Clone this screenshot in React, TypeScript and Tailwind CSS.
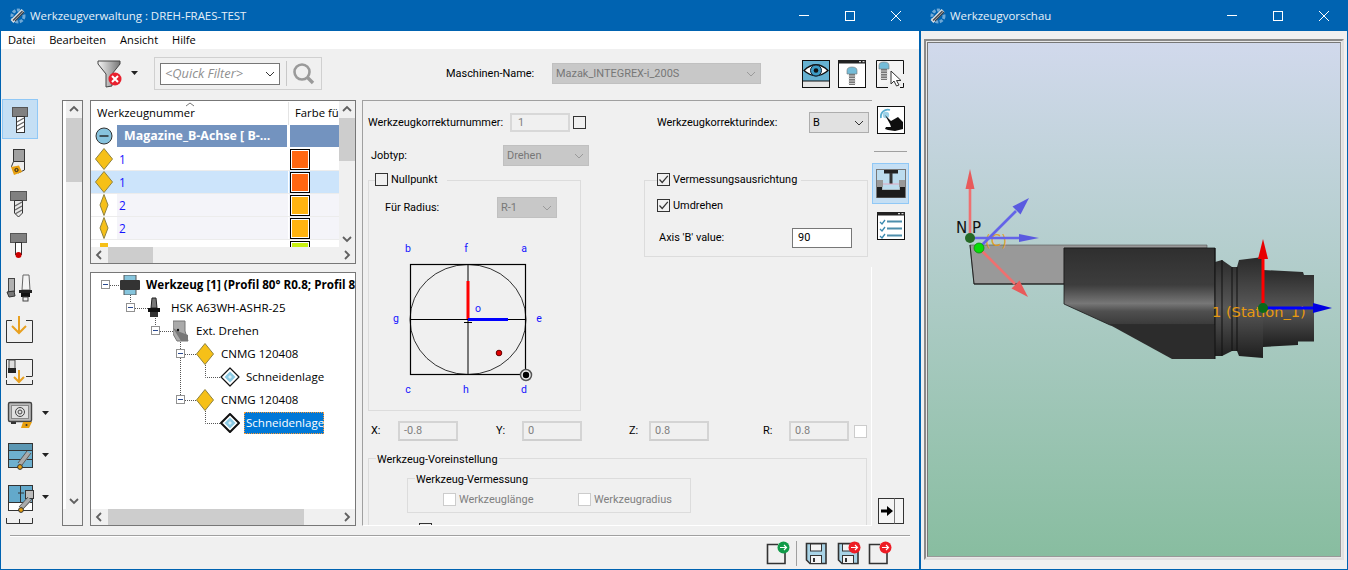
import React from "react";

const OS = "[font-family:'Open_Sans',sans-serif]";
const RB = "[font-family:Roboto,sans-serif]";

function Logo() {
  return (
    <svg width="18" height="18" viewBox="0 0 18 18" className="shrink-0">
      <circle cx="9" cy="9" r="6" fill="none" stroke="#6fa8d6" strokeWidth="3" strokeDasharray="3 1.4" />
      <path d="M3 14.5 14 3.5" stroke="#d8dde2" strokeWidth="4" />
      <path d="M4 13.5 13.5 4M6 14 15 5" stroke="#3a3f46" strokeWidth="1.1" />
    </svg>
  );
}

function WinButtons() {
  return (
    <div className="flex h-full items-center">
      <div className="flex h-full w-[46px] items-center justify-center">
        <div className="h-px w-[10px] bg-white" />
      </div>
      <div className="flex h-full w-[46px] items-center justify-center">
        <div className="h-[10px] w-[10px] border border-white" />
      </div>
      <div className="flex h-full w-[46px] items-center justify-center">
        <svg width="10" height="10" viewBox="0 0 10 10"><path d="M0 0 10 10M10 0 0 10" stroke="#fff" strokeWidth="1" /></svg>
      </div>
    </div>
  );
}

function TitleBar({ title }: { title: string }) {
  return (
    <div className={`flex h-[31px] shrink-0 items-center justify-between bg-[#0063b1] text-[#e6f0f8] ${OS}`}>
      <div className="flex items-center pl-[8px]">
        <Logo />
        <span className="ml-[3px] text-[11.45px]">{title}</span>
      </div>
      <WinButtons />
    </div>
  );
}

function Chevron({ dir }: { dir: "up" | "down" | "left" | "right" }) {
  const d = { up: "M1 6 5 2 9 6", down: "M1 3 5 7 9 3", left: "M6 1 2 5 6 9", right: "M3 1 7 5 3 9" }[dir];
  return (
    <svg width="10" height="10" viewBox="0 0 10 10" className="shrink-0">
      <path d={d} fill="none" stroke="#606060" strokeWidth="1.8" />
    </svg>
  );
}

function Caret() {
  return <path d="M0 0h7L3.5 4z" fill="#222" />;
}

function LeftIcon({ i }: { i: number }) {
  const caret = i >= 7 && i <= 9;
  return (
    <svg width="52" height="42" viewBox="0 0 52 42" className="block shrink-0">
      {i === 0 && (
        <g>
          <rect x="11.5" y="9.5" width="15" height="9" fill="#808080" stroke="#555" />
          <rect x="15.5" y="18.5" width="8" height="16" fill="#fff" stroke="#333" />
          <path d="M16 24 23 20M16 28 23 24M16 32 23 28" stroke="#666" strokeWidth="1.4" />
        </g>
      )}
      {i === 1 && (
        <g>
          <rect x="12.5" y="9.5" width="11" height="12" fill="#a0a0a0" stroke="#333" />
          <path d="M12.5 21.5H23.5V30L17 33 10.5 26.5Z" fill="#eee" stroke="#333" />
          <path d="M10 27 18 25.5 21 32 13 35Z" fill="#e8a010" />
          <circle cx="15.5" cy="30" r="1.6" fill="none" stroke="#222" />
        </g>
      )}
      {i === 2 && (
        <g>
          <rect x="9.5" y="9.5" width="16" height="9" fill="#808080" stroke="#555" />
          <path d="M13.5 18.5H21.5V31L17.5 35 13.5 31Z" fill="#e8e8e8" stroke="#333" />
          <path d="M14 24 21 20M14 28 21 24M14 32 21 28" stroke="#666" strokeWidth="1.4" />
        </g>
      )}
      {i === 3 && (
        <g>
          <rect x="9.5" y="9.5" width="16" height="9" fill="#808080" stroke="#555" />
          <rect x="14.5" y="18.5" width="6" height="12" fill="#fff" stroke="#333" />
          <circle cx="17.5" cy="31" r="3" fill="#c00" />
        </g>
      )}
      {i === 4 && (
        <g>
          <rect x="7.5" y="12.5" width="6" height="13" fill="#b0b0b0" stroke="#444" />
          <path d="M6 26 13 25 14 30 8 31Z" fill="#777" stroke="#333" />
          <path d="M21 24 22 9H28L29 24Z" fill="#f4f4f4" stroke="#666" />
          <rect x="18" y="24" width="13" height="3" fill="#222" />
          <rect x="20" y="27" width="9" height="4" fill="#111" />
          <rect x="22" y="31" width="5" height="4" fill="#eee" stroke="#444" />
        </g>
      )}
      {i === 5 && (
        <g>
          <path d="M11 12.5H5.5V34.5H31.5V12.5H25" fill="none" stroke="#333" />
          <path d="M18 8V25M11 18 18 25 25 18" fill="none" stroke="#e8a020" strokeWidth="2" />
        </g>
      )}
      {i === 6 && (
        <g>
          <path d="M5.5 28V9.5H31.5V26M25 26.5H31.5M5.5 30V34.5H31.5V30" fill="none" stroke="#333" />
          <rect x="8" y="10" width="6" height="9" fill="#ddd" stroke="#444" />
          <rect x="7" y="18" width="8" height="5" fill="#222" />
          <path d="M18 20V32M13 27 18 32 23 27" fill="none" stroke="#e8a020" strokeWidth="2" />
        </g>
      )}
      {i === 7 && (
        <g>
          <rect x="7.5" y="10.5" width="23" height="19" rx="1.5" fill="#b8b8b8" stroke="#444" strokeWidth="1.4" />
          <rect x="10.5" y="13.5" width="17" height="13" fill="#e0e0e0" stroke="#888" />
          <circle cx="19" cy="20" r="4.5" fill="none" stroke="#444" />
          <circle cx="19" cy="20" r="2" fill="none" stroke="#444" />
          <rect x="10" y="30" width="5" height="2" fill="#333" />
          <path d="M22 30H31L28 36H20Z" fill="#e8a010" />
          <circle cx="25.5" cy="33" r="1" fill="#333" />
        </g>
      )}
      {i === 8 && (
        <g>
          <rect x="7.5" y="9.5" width="24" height="24" fill="#6eb0cf" stroke="#333" />
          <rect x="8" y="10" width="23" height="6" fill="#5b97b3" />
          <path d="M7.5 16.5H31.5M7.5 25.5H31.5" stroke="#333" />
          <path d="M28 19 19 30" stroke="#aaa" strokeWidth="5" />
          <path d="M30 19 21 31M26 17 17 29" stroke="#444" strokeWidth=".8" />
          <circle cx="19" cy="33" r="2.4" fill="#e8a010" stroke="#333" />
        </g>
      )}
      {i === 9 && (
        <g>
          <rect x="7.5" y="9.5" width="24" height="25" fill="#fff" stroke="#333" />
          <rect x="8" y="10" width="23" height="16" fill="#63a9cb" />
          <path d="M19.5 10V26M7.5 26.5H31.5M17 17H23" stroke="#333" />
          <rect x="24.5" y="14.5" width="8" height="8" fill="#bbb" stroke="#333" />
          <path d="M29 23 20 32" stroke="#aaa" strokeWidth="5" />
          <path d="M31 23 22 33M27 21 18 31" stroke="#444" strokeWidth=".8" />
          <circle cx="20" cy="34" r="2.4" fill="#e8a010" stroke="#333" />
        </g>
      )}
      {caret && <g transform="translate(41 19)"><Caret /></g>}
    </svg>
  );
}

function LeftStrip() {
  return (
    <div className="flex h-[428px] w-[61px] shrink-0 flex-col overflow-hidden">
      <div className="relative h-[42px] shrink-0">
        <div className="absolute left-[1px] top-[1px] h-[40px] w-[36px] border border-[#90c8f6] bg-[#c5dff4]" />
        <div className="relative"><LeftIcon i={0} /></div>
      </div>
      {[1, 2, 3, 4, 5, 6, 7, 8, 9].map((i) => (
        <LeftIcon key={i} i={i} />
      ))}
      <svg width="52" height="8" viewBox="0 0 52 8" className="block shrink-0">
        <path d="M5.5 0V5.5H31.5V0M18.5 1V5" fill="none" stroke="#333" />
      </svg>
    </div>
  );
}

function VBar({ thumb, light }: { thumb: string; light?: boolean }) {
  return (
    <div className="flex h-full w-[16px] shrink-0 flex-col items-center bg-[#f0f0f0]">
      <div className="flex h-[17px] shrink-0 items-center justify-center"><Chevron dir="up" /></div>
      <div className={`${thumb} w-full bg-[#cdcdcd]`} />
      <div className="flex-1" />
      <div className={`flex h-[17px] shrink-0 items-center justify-center ${light ? "mb-[16px]" : ""}`}><Chevron dir="down" /></div>
    </div>
  );
}

function HBar({ thumb }: { thumb: string }) {
  return (
    <div className="flex h-[16px] shrink-0 items-center bg-[#f0f0f0]">
      <div className="flex w-[17px] shrink-0 items-center justify-center"><Chevron dir="left" /></div>
      <div className={`${thumb} h-full bg-[#cdcdcd]`} />
      <div className="flex-1" />
      <div className="flex w-[17px] shrink-0 items-center justify-center"><Chevron dir="right" /></div>
    </div>
  );
}

function Diamond({ narrow }: { narrow?: boolean }) {
  return (
    <svg width="18" height="22" viewBox="0 0 18 22" className="block shrink-0">
      {narrow ? (
        <path d="M9 .5 13 11 9 21.5 5 11Z" fill="#f6c018" stroke="#8f8340" />
      ) : (
        <path d="M9 .5 17.5 11 9 21.5 .5 11Z" fill="#f6c018" stroke="#8f8340" />
      )}
    </svg>
  );
}

function GridRow({ n, color, narrow, selected }: { n: string; color: string; narrow?: boolean; selected?: boolean }) {
  const bg = selected ? "bg-[#cce4fb]" : n === "2" ? "bg-[#f4f4f9]" : "bg-white";
  return (
    <div className={`flex h-[23px] shrink-0 border-b border-[#ececec] ${bg}`}>
      <div className={`flex w-[26px] shrink-0 items-center justify-center ${selected ? "" : "bg-white"}`}>
        <Diamond narrow={narrow} />
      </div>
      <div className="flex w-[172px] shrink-0 items-center border-r border-white pl-[2px] pt-[2px] text-[11.8px] text-[#1414ff]">{n}</div>
      <div className="pl-[1px] pt-[1px]">
        <div className="h-[21px] w-[20px] border border-black bg-white p-[1px]">
          <div className={`h-full w-full ${color}`} />
        </div>
      </div>
    </div>
  );
}

function Grid() {
  return (
    <div className={`flex h-[164px] w-[266px] shrink-0 flex-col border border-[#777] bg-white text-[11.3px] ${OS}`}>
      <div className="flex min-h-0 flex-1">
        <div className="flex w-[248px] shrink-0 flex-col overflow-hidden">
          <div className="relative flex h-[24px] shrink-0 items-center pt-[1px]">
            <div className="flex h-full w-[198px] items-center border-r border-[#e4e4e4] pl-[6px]">Werkzeugnummer</div>
            <div className="pl-[6px]">Farbe fü</div>
            <svg width="10" height="5" viewBox="0 0 10 5" className="absolute left-[94px] top-[1px]"><path d="M1 4 5 1 9 4" fill="none" stroke="#777" /></svg>
          </div>
          <div className="flex h-[23px] shrink-0 pb-px">
            <div className="flex w-[26px] shrink-0 items-center justify-center">
              <svg width="18" height="18" viewBox="0 0 18 18"><circle cx="9" cy="9" r="8" fill="#87c3de" stroke="#333" /><path d="M4.5 9h9" stroke="#222" strokeWidth="1.4" /></svg>
            </div>
            <div className="flex w-[170px] shrink-0 items-center whitespace-nowrap bg-[#7393bf] pl-[7px] text-[12.4px] font-bold text-white">Magazine_B-Achse [ B-...</div>
            <div className="ml-[3px] flex-1 bg-[#7393bf]" />
          </div>
          <GridRow n="1" color="bg-[#ff6611]" />
          <GridRow n="1" color="bg-[#ff6611]" selected />
          <GridRow n="2" color="bg-[#ffb310]" narrow />
          <GridRow n="2" color="bg-[#ffb310]" narrow />
          <div className="flex h-[23px] shrink-0">
            <div className="flex w-[26px] shrink-0 justify-center pt-[3px]"><div className="h-[10px] w-[8px] bg-[#f6c018]" /></div>
            <div className="w-[172px] shrink-0" />
            <div className="pl-[1px] pt-[1px]"><div className="h-[21px] w-[20px] border border-black bg-white p-[1px]"><div className="h-full w-full bg-[#c8f010]" /></div></div>
          </div>
        </div>
        <VBar thumb="h-[43px]" />
      </div>
      <HBar thumb="w-[45px]" />
    </div>
  );
}

function Expander() {
  return (
    <div className="flex h-[9px] w-[9px] shrink-0 items-center justify-center border border-[#919191] bg-white">
      <div className="h-px w-[5px] bg-[#2a4a90]" />
    </div>
  );
}

function Schneid({ selected }: { selected?: boolean }) {
  return (
    <svg width="20" height="20" viewBox="0 0 20 20" className="block shrink-0">
      <path d="M10 1 19 10 10 19 1 10Z" fill="#fff" stroke="#111" strokeWidth={selected ? 2 : 1.2} strokeLinejoin="round" />
      <path d="M10 4.5 15.5 10 10 15.5 4.5 10Z" fill="#8ccbe4" />
      <path d="M10 8 12 10 10 12 8 10Z" fill="#d8f0fa" />
    </svg>
  );
}

function Tree() {
  return (
    <div className={`flex h-[254px] w-[266px] shrink-0 flex-col border border-[#777] bg-white text-[11.55px] ${OS}`}>
      <div className="relative min-h-0 flex-1 overflow-hidden">
        <svg width="264" height="236" viewBox="91 273 264 236" className="absolute left-0 top-0">
          <path
            d="M110 285.5H120M130.5 293V303M135 308.5H148M155.5 316V326M160 331.5H173M180.5 340V395M185 354.5H196M185 400.5H196M205.5 363V377.5H220M205.5 409V423.5H220"
            fill="none"
            stroke="#555"
            strokeDasharray="1 1"
          />
        </svg>
        <div className="relative flex flex-col">
          <div className="flex h-[23px] items-center pl-[10px]">
            <Expander />
            <svg width="20" height="20" viewBox="0 0 20 20" className="ml-[10px] shrink-0">
              <rect x="4" y="0" width="12" height="20" fill="#86c5dd" stroke="#555" />
              <rect x="0" y="5" width="20" height="10" rx="1" fill="#333" />
            </svg>
            <span className="ml-[6px] whitespace-nowrap pt-[1px] text-[11.65px] font-bold">Werkzeug [1] (Profil 80° R0.8; Profil 8</span>
          </div>
          <div className="flex h-[23px] items-center pl-[35px]">
            <Expander />
            <svg width="12" height="22" viewBox="0 0 12 22" className="ml-[13px] shrink-0">
              <path d="M3 11 4 1H8L9 11Z" fill="#777" stroke="#222" />
              <rect x="0" y="11" width="12" height="4" fill="#111" />
              <rect x="2" y="15" width="8" height="5" fill="#333" />
            </svg>
            <span className="ml-[11px] pt-[1px]">HSK A63WH-ASHR-25</span>
          </div>
          <div className="flex h-[23px] items-center pl-[60px]">
            <Expander />
            <svg width="16" height="22" viewBox="0 0 16 22" className="ml-[13px] shrink-0">
              <path d="M0 1H12V11L15 21H4L0 14Z" fill="#aaa" stroke="#777" />
              <path d="M0 8 7 12 15 15 15 21 8 21Z" fill="#777" />
              <circle cx="5" cy="10" r="1.2" fill="#111" />
            </svg>
            <span className="ml-[7px] pt-[1px]">Ext. Drehen</span>
          </div>
          <div className="flex h-[23px] items-center pl-[85px]">
            <Expander />
            <div className="ml-[11px]"><Diamond /></div>
            <span className="ml-[7px] pt-[1px]">CNMG 120408</span>
          </div>
          <div className="flex h-[23px] items-center pl-[129px]">
            <Schneid />
            <span className="ml-[6px] pt-[1px]">Schneidenlage</span>
          </div>
          <div className="flex h-[23px] items-center pl-[85px]">
            <Expander />
            <div className="ml-[11px]"><Diamond /></div>
            <span className="ml-[7px] pt-[1px]">CNMG 120408</span>
          </div>
          <div className="flex h-[23px] items-center pl-[129px]">
            <Schneid selected />
            <span className="ml-[4px] flex h-[22px] w-[80px] items-center border border-dotted border-[#ff9a30] bg-[#0078d7] pl-[1px] pt-[1px] text-white">Schneidenlage</span>
          </div>
        </div>
      </div>
      <HBar thumb="w-[196px]" />
    </div>
  );
}

function Check({ on, disabled }: { on?: boolean; disabled?: boolean }) {
  return (
    <div className={`flex h-[13px] w-[13px] shrink-0 items-center justify-center border ${disabled ? "border-[#cccccc] bg-white" : "border-[#333]"} ${on ? "bg-[#f0f0f0]" : ""}`}>
      {on && <svg width="11" height="11" viewBox="0 0 11 11"><path d="M1.5 5.5 4.2 8.5 9.8 1.8" fill="none" stroke="#333" strokeWidth="1.2" /></svg>}
    </div>
  );
}

function DisInput({ v }: { v: string }) {
  return (
    <div className="flex h-[20px] w-[60px] shrink-0 items-center border-2 border-[#d4d4d4] border-b-[#cfcfcf] pl-[4px] pt-[1px] text-[#808080]">{v}</div>
  );
}

function SelectBox({ text, w, h, enabled }: { text: string; w: string; h: string; enabled?: boolean }) {
  return (
    <div className={`flex ${w} ${h} shrink-0 items-center justify-between border pl-[3px] pr-[4px] ${enabled ? "border-[#adadad] bg-[#e1e1e1] text-black" : "border-[#c0c0c0] bg-[#c8c8c8] text-[#777]"}`}>
      <span className="whitespace-nowrap pt-[1px]">{text}</span>
      <svg width="10" height="6" viewBox="0 0 10 6"><path d="M1 1 5 5 9 1" fill="none" stroke={enabled ? "#333" : "#9a9a9a"} /></svg>
    </div>
  );
}

function Diagram() {
  return (
    <svg width="180" height="165" viewBox="384 238 180 165" className="ml-[15px] mt-[20px] block">
      <rect x="410.5" y="264.5" width="115" height="110" fill="none" stroke="#000" strokeWidth="1.2" />
      <ellipse cx="468" cy="319.5" rx="58" ry="55" fill="none" stroke="#000" strokeWidth=".8" />
      <path d="M468 264V374M410 319.5H526" stroke="#000" />
      <path d="M464 322.5H472" stroke="#000" />
      <path d="M468 281V319" stroke="#f00" strokeWidth="3" />
      <path d="M468 319.5H508" stroke="#00f" strokeWidth="3" />
      <circle cx="499" cy="353" r="2.8" fill="#e00000" stroke="#600" />
      <circle cx="526" cy="375" r="5.5" fill="#f0f0f0" stroke="#555" strokeWidth="1.5" />
      <circle cx="526" cy="375" r="3.2" fill="#000" />
      <g fill="#1414ff" fontSize="10.5" textAnchor="middle">
        <text x="408" y="252">b</text>
        <text x="466" y="252">f</text>
        <text x="524" y="252">a</text>
        <text x="396" y="322">g</text>
        <text x="539" y="322">e</text>
        <text x="408" y="393">c</text>
        <text x="466" y="393">h</text>
        <text x="524" y="393">d</text>
        <text x="478" y="312">o</text>
      </g>
    </svg>
  );
}

function Form() {
  return (
    <div className="relative mt-[2px] flex h-[426px] w-[510px] shrink-0 flex-col overflow-hidden border-b border-l border-t border-b-white border-l-[#a0a0a0] border-t-[#a0a0a0] pl-[5px] text-[10.95px]">
      <div className="absolute right-0 top-[166px] h-[260px] w-px bg-white" />
      <div className="mt-[11px] flex h-[21px] shrink-0 items-center">
        <div className="w-[142px] shrink-0 pt-[1px]">Werkzeugkorrekturnummer:</div>
        <div className="flex h-[19px] w-[60px] shrink-0 items-center border-2 border-[#d8d8d8] pl-[6px] pt-[1px] text-[#808080]">1</div>
        <div className="ml-[3px]"><Check /></div>
        <div className="ml-[71px] w-[152px] shrink-0 pt-[1px]">Werkzeugkorrekturindex:</div>
        <SelectBox text="B" w="w-[60px]" h="h-[21px]" enabled />
      </div>
      <div className="flex shrink-0">
        <div className="w-[276px] shrink-0">
          <div className="mt-[12px] flex h-[21px] items-center pl-[3px]">
            <div className="w-[132px] shrink-0 pt-[1px]">Jobtyp:</div>
            <SelectBox text="Drehen" w="w-[86px]" h="h-[21px]" />
          </div>
          <div className="relative mt-[14px] h-[231px] w-[213px] border border-[#dcdcdc]">
            <div className="absolute -top-[8px] left-[6px] flex items-center bg-[#f0f0f0] pr-[10px]">
              <Check />
              <span className="ml-[3px] leading-[13px]">Nullpunkt</span>
            </div>
            <div className="mt-[16px] flex h-[21px] items-center pl-[16px]">
              <div className="w-[112px] shrink-0 pt-[1px]">Für Radius:</div>
              <SelectBox text="R-1" w="w-[60px]" h="h-[21px]" />
            </div>
            <Diagram />
          </div>
        </div>
        <div className="relative mt-[47px] h-[77px] w-[224px] shrink-0 border border-[#dcdcdc]">
          <div className="absolute -top-[8px] left-[12px] flex items-center bg-[#f0f0f0] pr-[4px]">
            <Check on />
            <span className="ml-[3px] leading-[13px]">Vermessungsausrichtung</span>
          </div>
          <div className="mt-[18px] flex h-[13px] items-center pl-[12px]">
            <Check on />
            <span className="ml-[3px] pt-[1px]">Umdrehen</span>
          </div>
          <div className="mt-[16px] flex h-[20px] items-center pl-[14px]">
            <div className="w-[133px] shrink-0 pt-[1px]">Axis 'B' value:</div>
            <div className="flex h-[20px] w-[60px] items-center border border-[#777] bg-white pl-[5px] pt-[1px]">90</div>
          </div>
        </div>
      </div>
      <div className="mt-[10px] flex h-[20px] shrink-0 items-center pl-[3px]">
        <div className="w-[27px] shrink-0 pt-[1px]">X:</div>
        <DisInput v="-0.8" />
        <div className="ml-[38px] w-[26px] shrink-0 pt-[1px]">Y:</div>
        <DisInput v="0" />
        <div className="ml-[47px] w-[20px] shrink-0 pt-[1px]">Z:</div>
        <DisInput v="0.8" />
        <div className="ml-[54px] w-[26px] shrink-0 pt-[1px]">R:</div>
        <DisInput v="0.8" />
        <div className="ml-[5px]"><Check disabled /></div>
      </div>
      <div className="relative mt-[17px] h-[90px] w-[499px] shrink-0 border border-[#dcdcdc]">
        <div className="absolute -top-[7px] left-[7px] bg-[#f0f0f0] px-[1px] leading-[15px]">Werkzeug-Voreinstellung</div>
        <div className="relative ml-[38px] mt-[19px] h-[35px] w-[284px] border border-[#dcdcdc]">
          <div className="absolute -top-[7px] left-[7px] bg-[#f0f0f0] px-[1px] leading-[15px]">Werkzeug-Vermessung</div>
          <div className="flex pl-[35px] pt-[13px] text-[#808080]">
            <div className="flex w-[135px] shrink-0 items-center"><Check disabled /><span className="ml-[3px] pt-[1px] leading-[13px]">Werkzeuglänge</span></div>
            <div className="flex items-center"><Check disabled /><span className="ml-[3px] pt-[1px] leading-[13px]">Werkzeugradius</span></div>
          </div>
        </div>
        <div className="ml-[50px] mt-[10px]"><Check /></div>
      </div>
    </div>
  );
}

function FrameIcon({ children }: { children: React.ReactNode }) {
  return <svg width="28" height="28" viewBox="0 0 28 28" className="block shrink-0">{children}</svg>;
}

function BoltBlue({ x, y }: { x: number; y: number }) {
  return (
    <g transform={`translate(${x} ${y})`}>
      <path d="M0 3.5Q0 0 5 0 10 0 10 3.5V7H0Z" fill="#74bcd8" stroke="#777" strokeWidth=".6" />
      <rect x="2" y="7" width="6" height="11" fill="#777" />
      <path d="M1.5 9H8.5M1.5 11.5H8.5M1.5 14H8.5M1.5 16.5H8.5" stroke="#cfcfcf" strokeWidth="1" />
    </g>
  );
}

function ToolbarIcons() {
  return (
    <div className="flex items-center">
      <div className="ml-[41px]">
        <FrameIcon>
          <rect x="0.5" y="0.5" width="27" height="21" fill="#66b2d2" stroke="#111" />
          <rect x="0.5" y="21" width="27" height="6.5" fill="#e6e6e6" stroke="#111" />
          <path d="M2 10.5Q14 -1 26 10.5 14 21 2 10.5Z" fill="#fff" stroke="#111" strokeWidth="1.3" />
          <circle cx="14" cy="10.5" r="5.5" fill="#3d9bc4" stroke="#123" />
          <circle cx="14" cy="10.5" r="2.3" fill="#111" />
        </FrameIcon>
      </div>
      <div className="ml-[8px]">
        <FrameIcon>
          <rect x="0.5" y="0.5" width="27" height="27" fill="#fff" stroke="#111" />
          <rect x="0" y="0" width="28" height="3.5" fill="#222" />
          <path d="M21 1.7h2M24.5 1.7h2" stroke="#fff" />
          <BoltBlue x={9} y={7} />
        </FrameIcon>
      </div>
      <div className="ml-[10px]">
        <FrameIcon>
          <path d="M0.5 27.5V0.5H27.5V14M0.5 27.5H12M27.5 23V27.5H24" fill="#f4f4f4" stroke="#111" />
          <BoltBlue x={3} y={2} />
          <path d="M15 11V24L18 21 20.5 26 23 25 20.5 20.5H25Z" fill="#fff" stroke="#333" />
        </FrameIcon>
      </div>
    </div>
  );
}

function RightColumn() {
  return (
    <div className="flex h-[428px] w-[37px] shrink-0 flex-col items-center">
      <div className="mt-[8px]">
        <FrameIcon>
          <rect x="0.5" y="0.5" width="27" height="27" fill="#fff" stroke="#111" />
          <path d="M4 12A7 7 0 0 1 13 4" fill="none" stroke="#58aed0" strokeWidth="1.8" />
          <circle cx="9" cy="9" r="3.2" fill="#9cd2e8" />
          <path d="M8 9 14 15 21 11 26 16 26 23 18 25 11 24 8 23 9 21 14 21 13 18Z" fill="#0e0e0e" />
        </FrameIcon>
      </div>
      <div className="mt-[17px] h-px w-[33px] bg-[#a0a0a0]" />
      <div className="mt-[11px] flex h-[41px] w-[37px] shrink-0 items-center justify-center border border-[#90c8f6] bg-[#c5dff4]">
        <svg width="30" height="29" viewBox="0 0 30 29" className="block">
          <rect x="0.5" y="0.5" width="29" height="28" fill="#bcdcee" stroke="#777" />
          <rect x="8" y="1" width="14" height="3.5" fill="#222" />
          <path d="M15 4V15" stroke="#333" strokeWidth="3" />
          <path d="M1 15H6V21H24V15H29" fill="none" stroke="#999" />
          <rect x="1" y="11" width="6" height="7" fill="#999" />
          <rect x="23" y="11" width="6" height="7" fill="#999" />
          <path d="M7 15H23" stroke="#e0a8c0" />
          <path d="M1 18H6V21H24V18H29V28.5H1Z" fill="#1c1c1c" />
        </svg>
      </div>
      <div className="mt-[8px]">
        <FrameIcon>
          <rect x="0.5" y="0.5" width="27" height="27" fill="#fff" stroke="#111" />
          <rect x="0" y="0" width="28" height="3.5" fill="#222" />
          <path d="M21 1.7h2M24.5 1.7h2" stroke="#fff" />
          <path d="M3 10 5 12 8 8M3 17 5 19 8 15M3 24 5 26 8 22" fill="none" stroke="#3a8ab0" strokeWidth="1.3" />
          <path d="M10 9.5H25M10 16.5H25M10 23.5H25" stroke="#4d8eab" strokeWidth="2" />
        </FrameIcon>
      </div>
      <div className="mb-[2px] mt-auto">
        <svg width="26" height="26" viewBox="0 0 26 26" className="block">
          <rect x="0.5" y="0.5" width="25" height="25" fill="#f4f4f4" stroke="#333" />
          <path d="M16.5 0.5V25.5" stroke="#777" />
          <path d="M3 11.5H9V8L15 13 9 18V14.5H3Z" fill="#000" />
        </svg>
      </div>
    </div>
  );
}

function Page({ color }: { color: string }) {
  return (
    <svg width="24" height="24" viewBox="0 0 24 24" className="block shrink-0">
      <path d="M12 3.5H1.5V22.5H19V11" fill="none" stroke="#333" strokeWidth="1.6" />
      <circle cx="17.5" cy="6.5" r="6" fill={color} />
      <path d="M14 6.5H20.5M18 4 20.5 6.5 18 9" fill="none" stroke="#fff" strokeWidth="1.2" />
    </svg>
  );
}

function Floppy({ color }: { color?: string }) {
  return (
    <svg width="24" height="24" viewBox="0 0 24 24" className="block shrink-0">
      <path d="M1.5 2.5H21V22.5H5L1.5 19Z" fill="#a8d3e6" stroke="#333" strokeWidth="1.6" />
      <rect x="5.5" y="3" width="11" height="7" fill="#f4f4f4" stroke="#333" />
      <rect x="5.5" y="14.5" width="11" height="8" fill="#f4f4f4" stroke="#333" />
      <rect x="8" y="17" width="2" height="4" fill="#333" />
      {color && <circle cx="17.5" cy="6.5" r="6" fill={color} />}
      {color && <path d="M14 6.5H20.5M18 4 20.5 6.5 18 9" fill="none" stroke="#fff" strokeWidth="1.2" />}
    </svg>
  );
}

function Preview3D() {
  return (
    <svg width="412" height="513" viewBox="928 43 412 513" className="block">
      <defs>
        <linearGradient id="bodyg" x1="0" y1="0" x2="0" y2="1">
          <stop offset="0" stopColor="#2f2f2f" />
          <stop offset=".48" stopColor="#3d3d3d" />
          <stop offset=".6" stopColor="#5a5a5a" />
          <stop offset=".72" stopColor="#777" />
          <stop offset=".82" stopColor="#505050" />
          <stop offset="1" stopColor="#3a3a3a" />
        </linearGradient>
        <linearGradient id="collarg" x1="0" y1="0" x2="0" y2="1">
          <stop offset="0" stopColor="#2a2a2a" />
          <stop offset=".5" stopColor="#585858" />
          <stop offset="1" stopColor="#1f1f1f" />
        </linearGradient>
      </defs>
      <path d="M970 245H1207V248H1064V284H974Z" fill="#999" stroke="#555" strokeWidth=".6" />
      <path d="M974 284H1064" stroke="#000" />
      <path d="M970 245 974 284" stroke="#222" />
      <path d="M1064 248H1215V325H1110L1064 304Z" fill="url(#bodyg)" stroke="#1a1a1a" strokeWidth=".8" />
      <path d="M1110 325H1215V359H1172Z" fill="#2c2c2c" />
      <path d="M1263 270 1303 272 1304 275 1314 275V341.5H1298V345L1263 347Z" fill="url(#collarg)" />
      <path d="M1215 262 1222 260 1232 267H1237L1239 260 1263 257V358L1239 356 1237 351H1232L1222 356H1215Z" fill="url(#collarg)" />
      <path d="M1222 260V356M1232 267V351M1237 267V351M1215 248V359" stroke="#111" strokeWidth="1" />
      <text x="1212" y="317" fill="#e89a10" fontSize="14.6" fontFamily="'DejaVu Sans',sans-serif">1 (Station_1)</text>
      <path d="M1263 308V259" stroke="#f00" strokeWidth="3" />
      <path d="M1258 259H1268L1263 239Z" fill="#e80000" />
      <path d="M1263 308H1313" stroke="#00f" strokeWidth="3" />
      <path d="M1313 303V313L1332 308Z" fill="#0000e0" />
      <circle cx="1263" cy="308" r="5" fill="#0a6a1a" />
      <text x="985" y="246" fill="#e89a10" fillOpacity=".85" fontSize="15" fontFamily="'DejaVu Sans',sans-serif">(C)</text>
      <path d="M970 238V189" stroke="#ef7070" strokeWidth="2.6" />
      <path d="M965.5 189H974.5L970 169Z" fill="#e85a5a" />
      <path d="M970 238H1019" stroke="#6464e8" strokeWidth="2.6" />
      <path d="M1019 234V242L1039 238Z" fill="#5a5ae0" />
      <path d="M979 248 1016 211" stroke="#6464e8" strokeWidth="2.6" />
      <path d="M1012.5 206.5 1020.5 214.5 1029 198Z" fill="#5a5ae0" />
      <path d="M979 248 1015 284" stroke="#ef7070" strokeWidth="2.6" />
      <path d="M1011.5 288.5 1019.5 280.5 1028 297Z" fill="#e85a5a" />
      <text x="956" y="233" fill="#111" fontSize="15" fontFamily="'DejaVu Sans',sans-serif">N P</text>
      <circle cx="970" cy="238" r="5" fill="#256a25" />
      <circle cx="979" cy="248" r="5" fill="#08dc08" stroke="#0b8a0b" strokeWidth=".8" />
    </svg>
  );
}

export default function App() {
  return (
    <div className={`flex h-[570px] w-[1348px] overflow-hidden bg-[#f0f0f0] text-[10.95px] text-black ${RB}`}>
      <div className="flex h-[570px] w-[920px] shrink-0 flex-col border-b border-l border-r border-[#0063b1]">
        <TitleBar title="Werkzeugverwaltung : DREH-FRAES-TEST" />
        <div className={`flex h-[18px] shrink-0 items-center bg-white pl-[7px] text-[11.1px] ${OS}`}>
          <span>Datei</span>
          <span className="ml-[14px]">Bearbeiten</span>
          <span className="ml-[14px]">Ansicht</span>
          <span className="ml-[14px]">Hilfe</span>
        </div>
        <div className="flex h-[49px] shrink-0 items-center">
          <svg width="44" height="28" viewBox="0 0 44 28" className="ml-[96px] block shrink-0">
            <defs>
              <linearGradient id="fun" x1="0" y1="0" x2="1" y2="0">
                <stop offset="0" stopColor="#f4f4f4" />
                <stop offset="1" stopColor="#777" />
              </linearGradient>
            </defs>
            <path d="M1 1H23V4L15 14V26L9 27V14L1 4Z" fill="url(#fun)" stroke="#444" />
            <circle cx="18" cy="19" r="6.5" fill="#e8202e" />
            <path d="M15 16 21 22M21 16 15 22" stroke="#fff" strokeWidth="2" />
            <g transform="translate(34 11)"><Caret /></g>
          </svg>
          <div className="ml-[13px] flex h-[33px] w-[168px] shrink-0 items-center border border-[#d0d0d0] pl-[5px]">
            <div className="flex h-[22px] w-[120px] shrink-0 items-center justify-between border border-[#777] bg-white pl-[4px] pr-[4px]">
              <span className={`text-[12.8px] italic text-[#8f8f8f] ${OS}`}>&lt;Quick Filter&gt;</span>
              <svg width="10" height="6" viewBox="0 0 10 6"><path d="M1 1 5 5 9 1" fill="none" stroke="#333" /></svg>
            </div>
            <div className="ml-[6px] h-[25px] w-px bg-[#c8c8c8]" />
            <svg width="22" height="22" viewBox="0 0 22 22" className="ml-[6px] block shrink-0">
              <circle cx="9" cy="9" r="7.5" fill="none" stroke="#9a9a9a" strokeWidth="2.6" />
              <path d="M14.5 14.5 20 20" stroke="#9a9a9a" strokeWidth="3.4" />
            </svg>
          </div>
          <div className="ml-[124px] w-[106px] shrink-0 pt-[1px]">Maschinen-Name:</div>
          <SelectBox text="Mazak_INTEGREX-i_200S" w="w-[209px]" h="h-[21px]" />
          <ToolbarIcons />
        </div>
        <div className="flex h-[428px] shrink-0">
          <LeftStrip />
          <div className="mt-[2px] flex h-[426px] w-[21px] shrink-0 border border-[#777]">
            <div className="h-[408px] w-[3px] shrink-0 bg-white" />
            <VBar thumb="h-[64px]" light />
          </div>
          <div className="ml-[7px] mt-[2px] flex h-[426px] flex-col">
            <Grid />
            <div className="mt-[8px]"><Tree /></div>
          </div>
          <div className="w-[6px] shrink-0" />
          <Form />
          <RightColumn />
        </div>
        <div className="mx-[9px] mt-[9px] h-[2px] shrink-0 border-t border-[#a0a0a0] bg-white" />
        <div className="flex flex-1 items-start justify-end pr-[27px] pt-[4px]">
          <Page color="#109a48" />
          <div className="ml-[6px] h-[25px] w-px bg-[#a0a0a0]" />
          <div className="ml-[8px]"><Floppy /></div>
          <div className="ml-[8px]"><Floppy color="#ee1c25" /></div>
          <div className="ml-[7px]"><Page color="#ee1c25" /></div>
        </div>
      </div>
      <div className="flex h-[570px] w-[428px] shrink-0 flex-col border-b border-l border-r border-[#0063b1]">
        <TitleBar title="Werkzeugvorschau" />
        <div className="ml-[3px] mt-[8px] h-[521px] w-[420px] shrink-0 border-2 border-[#8a8a8a] border-b-[#e0e0e0] border-r-[#e0e0e0]">
          <div className="h-full w-full border border-[#e8e8e8]">
            <div className="h-full w-full border border-[#777] border-b-[#999] border-r-[#999]">
              <div className="h-full w-full overflow-hidden bg-linear-to-b from-[#d1d9ec] to-[#88bda0]">
                <Preview3D />
              </div>
            </div>
          </div>
        </div>
      </div>
    </div>
  );
}
